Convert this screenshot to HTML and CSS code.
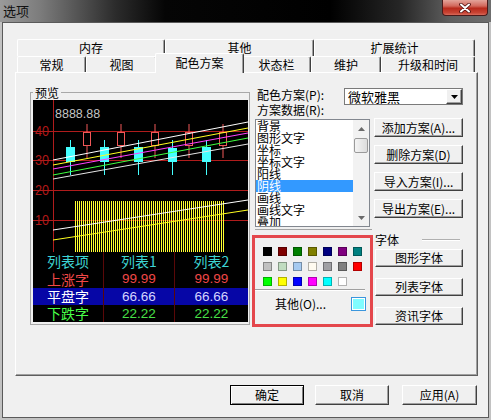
FILE: index.html
```html
<!DOCTYPE html>
<html lang="zh-CN">
<head>
<meta charset="utf-8">
<title>选项</title>
<link rel="stylesheet" href="styles.css">
</head>
<body>
<div class="window">
  <div class="titlebar">
    <span class="title">选项</span>
    <div class="close">
      <svg width="12" height="10" viewBox="0 0 12 10"><path d="M2 1.5 L10 8.5 M10 1.5 L2 8.5" stroke="#4a0c0c" stroke-width="3.6" stroke-linecap="round"/><path d="M2 1.5 L10 8.5 M10 1.5 L2 8.5" stroke="#ffffff" stroke-width="2" stroke-linecap="round"/></svg>
    </div>
  </div>
  <div class="client">
    <div class="tabctl">
      <div class="tabrow row1">
        <div class="tab" style="width:148px">内存</div>
        <div class="tab" style="width:149px">其他</div>
        <div class="tab" style="width:161px">扩展统计</div>
      </div>
      <div class="tabrow row2">
        <div class="tab" style="width:69px">常规</div>
        <div class="tab" style="width:71px">视图</div>
        <div class="tab sel" style="width:89px">配色方案</div>
        <div class="tab" style="width:69px">状态栏</div>
        <div class="tab" style="width:70px">维护</div>
        <div class="tab" style="width:94px">升级和时间</div>
      </div>
      <div class="panel">
        <fieldset class="group">
          <legend>预览</legend>
          <div class="black">
            <svg class="chart" width="215" height="152" viewBox="0 0 215 152">
              <g stroke="#b01c1c" stroke-width="1">
                <line x1="20.5" y1="0" x2="20.5" y2="152"/>
                <line x1="0" y1="31.5" x2="215" y2="31.5"/>
                <line x1="0" y1="60.5" x2="215" y2="60.5"/>
                <line x1="0" y1="90.5" x2="215" y2="90.5"/>
                <line x1="0" y1="120.5" x2="215" y2="120.5"/>
              </g>
              <g fill="#b01818" font-family="Liberation Sans, sans-serif" font-size="15">
                <text x="2" y="36" textLength="14" lengthAdjust="spacingAndGlyphs">40</text>
                <text x="2" y="65" textLength="14" lengthAdjust="spacingAndGlyphs">30</text>
                <text x="2" y="95" textLength="14" lengthAdjust="spacingAndGlyphs">20</text>
                <text x="2" y="125" textLength="14" lengthAdjust="spacingAndGlyphs">10</text>
              </g>
              <text x="22" y="18" fill="#c4c4c4" font-family="Liberation Sans, sans-serif" font-size="12.5">8888.88</text>
              <g stroke="#44ffff" fill="#44ffff" stroke-width="1">
                <line x1="37.5" y1="40" x2="37.5" y2="75"/>
                <rect x="33.5" y="47.5" width="8" height="14"/>
                <line x1="71.5" y1="40" x2="71.5" y2="75"/>
                <rect x="67.5" y="47.5" width="8" height="14"/>
                <line x1="105.5" y1="40" x2="105.5" y2="75"/>
                <rect x="101.5" y="47.5" width="8" height="14"/>
                <line x1="139.5" y1="40" x2="139.5" y2="75"/>
                <rect x="135.5" y="48.5" width="8" height="13"/>
                <line x1="173.5" y1="40" x2="173.5" y2="75"/>
                <rect x="169.5" y="47.5" width="8" height="14"/>
              </g>
              <g stroke="#f05858" fill="none" stroke-width="1">
                <line x1="54" y1="24" x2="54" y2="32"/><line x1="54" y1="46" x2="54" y2="58"/>
                <rect x="50.5" y="32.5" width="7" height="13"/>
                <line x1="88" y1="24" x2="88" y2="32"/><line x1="88" y1="46" x2="88" y2="58"/>
                <rect x="84.5" y="32.5" width="7" height="13"/>
                <line x1="122" y1="24" x2="122" y2="32"/><line x1="122" y1="46" x2="122" y2="58"/>
                <rect x="118.5" y="32.5" width="7" height="13"/>
                <line x1="156" y1="24" x2="156" y2="32"/><line x1="156" y1="46" x2="156" y2="58"/>
                <rect x="152.5" y="32.5" width="7" height="13"/>
                <line x1="190" y1="24" x2="190" y2="32"/><line x1="190" y1="46" x2="190" y2="58"/>
                <rect x="186.5" y="32.5" width="7" height="13"/>
              </g>
              <g stroke-width="1">
                <line x1="20" y1="60" x2="215" y2="22" stroke="#ffffff"/>
                <line x1="20" y1="65" x2="215" y2="28" stroke="#ffff20"/>
                <line x1="20" y1="69" x2="215" y2="33" stroke="#ff40ff"/>
                <line x1="20" y1="75" x2="215" y2="38" stroke="#40ff40"/>
                <line x1="20" y1="79" x2="215" y2="44" stroke="#e6e6e6"/>
              </g>
              <line x1="42" y1="126.5" x2="191" y2="126.5" stroke="#ffff30" stroke-width="51" stroke-dasharray="1 1" shape-rendering="crispEdges"/>
              <line x1="20" y1="130" x2="215" y2="100" stroke="#ffffff" stroke-width="1"/>
              <line x1="20" y1="140" x2="215" y2="110" stroke="#ffff20" stroke-width="1"/>
            </svg>
            <div class="qtable">
              <div class="qrow h18"><span class="c1 cyan">列表项</span><span class="c2 cyan">列表1</span><span class="c3 cyan">列表2</span></div>
              <div class="qrow h18"><span class="c1 red">上涨字</span><span class="c2 red num">99.99</span><span class="c3 red num">99.99</span></div>
              <div class="qrow h17 blue"><span class="c1 white">平盘字</span><span class="c2 lav num">66.66</span><span class="c3 lav num">66.66</span></div>
              <div class="qrow h17"><span class="c1 green">下跌字</span><span class="c2 green2 num">22.22</span><span class="c3 green2 num">22.22</span></div>
            </div>
          </div>
        </fieldset>
        <div class="rightcol">
          <div class="rowA">
            <span class="lbl">配色方案(P):</span>
            <div class="combo">
              <span class="combotext">微软雅黑</span>
              <span class="ddbtn"><svg width="7" height="4" viewBox="0 0 7 4"><path d="M0 0 H7 L3.5 4 Z" fill="#000"/></svg></span>
            </div>
          </div>
          <div class="lbl2">方案数据(R):</div>
          <div class="lower">
            <div class="listcol">
              <div class="listbox">
                <div class="items">
                  <div class="item">背景</div>
                  <div class="item">图形文字</div>
                  <div class="item">坐标</div>
                  <div class="item">坐标文字</div>
                  <div class="item">阳线</div>
                  <div class="item selitem">阴线</div>
                  <div class="item">画线</div>
                  <div class="item">画线文字</div>
                  <div class="item">叠加</div>
                </div>
                <div class="vscroll">
                  <div class="sbtn"><svg width="7" height="4" viewBox="0 0 7 4"><path d="M0 4 H7 L3.5 0 Z" fill="#6a6a6a"/></svg></div>
                  <div class="thumb"></div>
                  <div class="sfill"></div>
                  <div class="sbtn"><svg width="7" height="4" viewBox="0 0 7 4"><path d="M0 0 H7 L3.5 4 Z" fill="#6a6a6a"/></svg></div>
                </div>
              </div>
              <div class="popline"></div>
              <div class="palette">
                <div class="swatches">
                  <i class="sw" style="background:#000000"></i>
                  <i class="sw" style="background:#800000"></i>
                  <i class="sw" style="background:#008000"></i>
                  <i class="sw" style="background:#808000"></i>
                  <i class="sw" style="background:#000080"></i>
                  <i class="sw" style="background:#800080"></i>
                  <i class="sw" style="background:#008080"></i>
                  <i class="sw" style="background:#c0c0c0"></i>
                  <i class="sw" style="background:#c0dcc0"></i>
                  <i class="sw" style="background:#a6caf0"></i>
                  <i class="sw" style="background:#fffbf0"></i>
                  <i class="sw" style="background:#a0a0a4"></i>
                  <i class="sw" style="background:#808080"></i>
                  <i class="sw" style="background:#ff0000"></i>
                  <i class="sw" style="background:#00ff00"></i>
                  <i class="sw" style="background:#ffff00"></i>
                  <i class="sw" style="background:#0000ff"></i>
                  <i class="sw" style="background:#ff00ff"></i>
                  <i class="sw" style="background:#00ffff"></i>
                  <i class="sw" style="background:#ffffff"></i>
                </div>
                <div class="psep"></div>
                <div class="other">
                  <span class="othertext">其他(O)...</span>
                  <i class="cur"></i>
                </div>
              </div>
            </div>
            <div class="btncol">
              <div class="btn b19">添加方案(A)...</div>
              <div class="btn b19">删除方案(D)</div>
              <div class="btn b19">导入方案(I)...</div>
              <div class="btn b19">导出方案(E)...</div>
              <div class="fontgrp">
                <div class="fglabel"><span>字体</span><i class="fgline"></i></div>
                <div class="btn fbtn">图形字体</div>
                <div class="btn fbtn">列表字体</div>
                <div class="btn fbtn">资讯字体</div>
              </div>
            </div>
          </div>
        </div>
      </div>
    </div>
    <div class="dlgbtns">
      <div class="btn dbtn default">确定</div>
      <div class="btn dbtn cancel">取消</div>
      <div class="btn dbtn apply">应用(A)</div>
    </div>
  </div>
</div>
</body>
</html>
```

FILE: styles.css
```css
html, body {
  margin: 0;
  padding: 0;
}
body {
  font-family: "Noto Sans CJK SC", "Liberation Sans", sans-serif;
  font-size: 12px;
  color: #000;
  background: #bdbdbd;
}
.window {
  width: 491px;
  height: 420px;
  background: #c2c2c2;
  display: flex;
  flex-direction: column;
  overflow: hidden;
}
.titlebar {
  height: 22px;
  flex: none;
  display: flex;
  align-items: flex-start;
  background: linear-gradient(90deg, #9a9a9a 0px, #7c7c7c 40px, #2c2c2c 115px, #050505 165px, #000 330px, #262626 400px, #5e5e5e 450px, #6e6e6e 491px);
}
.title {
  padding: 3px 0 0 3px;
  font-size: 13px;
  line-height: 16px;
  color: #111;
}
.close {
  margin-left: auto;
  margin-right: 3px;
  width: 46px;
  height: 16px;
  box-sizing: border-box;
  border: 1px solid #4a1a1a;
  border-top: none;
  border-radius: 0 0 4px 4px;
  background: linear-gradient(180deg, #e3a49a 0%, #d2685c 40%, #b82a1c 55%, #c84434 85%, #d86a5a 100%);
  display: flex;
  align-items: center;
  justify-content: center;
}
.client {
  margin-left: 2px;
  width: 487px;
  height: 396px;
  box-sizing: border-box;
  border: 1px solid #5a5a5a;
  background: #f0f0f0;
  flex: none;
}
.tabctl {
  padding: 16px 0 0 12px;
}
.tabrow {
  display: flex;
  margin-left: 2px;
  width: 458px;
}
.row1 { height: 17px; }
.row2 { height: 16px; }
.tab {
  box-sizing: border-box;
  flex: none;
  background: #f0f0f0;
  border-top: 1px solid #ffffff;
  border-left: 1px solid #ffffff;
  border-right: 1px solid #404040;
  box-shadow: inset -1px 0 0 #a0a0a0;
  border-radius: 2px 2px 0 0;
  text-align: center;
  line-height: 15px;
  font-size: 12px;
}
.row1 .tab { height: 17px; }
.row2 .tab { height: 16px; }
.row2 .tab.sel {
  height: 20px;
  margin: -3px -2px 0 -2px;
  line-height: 17px;
  position: relative;
  z-index: 1;
}
.panel {
  box-sizing: border-box;
  width: 463px;
  height: 304px;
  border-top: 1px solid #ffffff;
  border-left: 1px solid #ffffff;
  border-right: 1px solid #5e5e5e;
  border-bottom: 1px solid #5e5e5e;
  box-shadow: inset -1px -1px 0 #a0a0a0;
  padding: 13px 0 0 14px;
  display: flex;
  align-items: flex-start;
}
.group {
  margin: 0;
  padding: 0 1px 2px 2px;
  border: 1px solid #a8a8a8;
  width: 220px;
  box-sizing: border-box;
  min-width: 0;
}
.group legend {
  padding: 0 2px;
  margin: 0;
  font-size: 12px;
  line-height: 13px;
}
.black {
  margin-top: 1px;
  width: 215px;
  height: 222px;
  background: #000;
  display: flex;
  flex-direction: column;
}
.chart {
  display: block;
  flex: none;
}
.qtable {
  display: flex;
  flex-direction: column;
}
.qrow {
  display: grid;
  grid-template-columns: 71px 71px 73px;
  font-size: 14px;
}
.qrow span {
  text-align: center;
  border-right: 1px solid #5a0808;
}
.qrow span.c3 { border-right: none; }
.h18 { height: 18px; line-height: 18px; }
.h17 { height: 17px; line-height: 17px; }
.qrow.blue { background: #0606a6; }
.num { font-family: "Liberation Sans", sans-serif; font-size: 13.5px; }
.cyan { color: #3ed4d4; }
.red { color: #f04848; }
.white { color: #ffffff; }
.lav { color: #d4d4ff; }
.green { color: #48ff48; }
.green2 { color: #48e048; }

.rightcol {
  width: 208px;
  margin: 2px 0 0 5px;
  display: flex;
  flex-direction: column;
}
.rowA {
  display: flex;
  height: 15px;
}
.lbl {
  width: 89px;
  padding-left: 2px;
  box-sizing: border-box;
  line-height: 13px;
  font-size: 12px;
  flex: none;
}
.combo {
  width: 119px;
  height: 17px;
  box-sizing: border-box;
  border: 1px solid #7a7a7a;
  background: #fff;
  display: flex;
  flex: none;
}
.combotext {
  flex: 1;
  padding-left: 3px;
  line-height: 15px;
  font-size: 13px;
}
.ddbtn {
  width: 16px;
  height: 15px;
  box-sizing: border-box;
  background: #f0f0f0;
  border-top: 1px solid #fff;
  border-left: 1px solid #fff;
  border-right: 1px solid #404040;
  border-bottom: 1px solid #404040;
  box-shadow: inset -1px -1px 0 #a0a0a0;
  display: flex;
  align-items: center;
  justify-content: center;
}
.lbl2 {
  padding-left: 2px;
  height: 13px;
  line-height: 13px;
  font-size: 12px;
}
.lower {
  display: flex;
  margin-top: 2px;
}
.listcol {
  width: 115px;
  flex: none;
  display: flex;
  flex-direction: column;
}
.listbox {
  margin-top: 1px;
  height: 108px;
  box-sizing: border-box;
  border: 1px solid #82878f;
  background: #fff;
  display: flex;
  overflow: hidden;
}
.items {
  flex: 1;
  overflow: hidden;
}
.item {
  height: 12px;
  line-height: 12px;
  font-size: 12px;
  padding-left: 1px;
  white-space: nowrap;
}
.selitem {
  background: #3399ff;
  color: #fff;
}
.vscroll {
  width: 16px;
  flex: none;
  background: #f2f2f2;
  display: flex;
  flex-direction: column;
  align-items: center;
}
.sbtn {
  height: 17px;
  width: 16px;
  display: flex;
  align-items: center;
  justify-content: center;
  flex: none;
}
.thumb {
  margin-top: 1px;
  width: 14px;
  height: 15px;
  box-sizing: border-box;
  border: 1px solid #9a9a9a;
  border-radius: 2px;
  background: linear-gradient(90deg, #f4f4f4, #dcdcdc);
  flex: none;
}
.sfill { flex: 1; }
.popline {
  margin-top: 2px;
  width: 117px;
  height: 1px;
  background: #a4a4a4;
}
.palette {
  margin: 5px 0 0 -3px;
  width: 121px;
  height: 92px;
  box-sizing: border-box;
  border: 3px solid #e4474c;
  background: #f0f0f0;
}
.swatches {
  display: grid;
  grid-template-columns: repeat(7, 9px);
  grid-auto-rows: 9px;
  gap: 6px;
  padding: 9px 0 0 8px;
}
.sw {
  display: block;
  width: 9px;
  height: 9px;
  box-sizing: border-box;
  border: 1px solid rgba(0, 0, 0, 0.3);
}
.psep {
  margin-top: 3px;
  width: 110px;
  height: 1px;
  background: #a0a0a0;
  border-bottom: 1px solid #fff;
}
.other {
  display: flex;
  align-items: center;
  margin-top: 6px;
  height: 14px;
}
.othertext {
  padding-left: 20px;
  line-height: 14px;
  font-size: 12px;
}
.cur {
  display: block;
  margin-left: auto;
  margin-right: 4px;
  width: 15px;
  height: 14px;
  box-sizing: border-box;
  border: 1px solid #3a96dd;
  background: #80fcff;
  box-shadow: inset 0 0 0 1px #fff;
}
.btncol {
  width: 89px;
  margin-left: 4px;
  flex: none;
  display: flex;
  flex-direction: column;
}
.btn {
  box-sizing: border-box;
  background: #f0f0f0;
  border-top: 1px solid #ffffff;
  border-left: 1px solid #ffffff;
  border-right: 1px solid #404040;
  border-bottom: 1px solid #404040;
  box-shadow: inset -1px -1px 0 #a0a0a0;
  text-align: center;
  font-size: 12px;
  white-space: nowrap;
}
.b19 {
  height: 19px;
  line-height: 17px;
  margin-bottom: 8px;
}
.b19:last-of-type { margin-bottom: 0; }
.fontgrp {
  margin-top: 8px;
  display: flex;
  flex-direction: column;
}
.fglabel {
  height: 12px;
  display: flex;
  align-items: center;
  padding-left: 1px;
  font-size: 12px;
  line-height: 12px;
}
.fgline {
  display: block;
  margin-left: 23px;
  width: 38px;
  height: 1px;
  background: #b0b0b0;
  border-bottom: 1px solid #fff;
}
.fbtn {
  margin-left: 1px;
  width: 88px;
  height: 18px;
  line-height: 16px;
  margin-top: 11px;
}
.fglabel + .fbtn { margin-top: 3px; }
.dlgbtns {
  display: flex;
  justify-content: flex-end;
  margin-top: 9px;
  padding-right: 11px;
}
.dbtn {
  height: 20px;
  line-height: 18px;
}
.default {
  width: 74px;
  margin-right: 11px;
  border: 1px solid #000;
  box-shadow: inset 1px 1px 0 #fff, inset -1px -1px 0 #808080;
}
.cancel {
  width: 74px;
  margin-right: 13px;
}
.apply {
  width: 75px;
}
```
